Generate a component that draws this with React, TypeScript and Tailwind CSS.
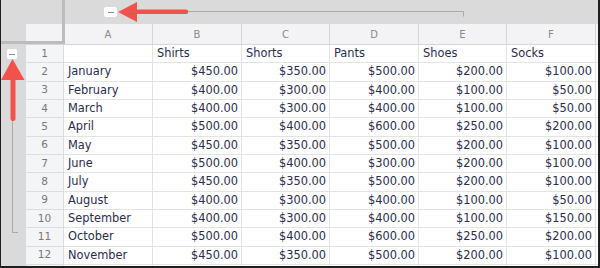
import React from "react";

const cols = ["A", "B", "C", "D", "E", "F"];

const rows: (string | number)[][] = [
  ["January", 450, 350, 500, 200, 100],
  ["February", 400, 300, 400, 100, 50],
  ["March", 400, 300, 400, 100, 50],
  ["April", 500, 400, 600, 250, 200],
  ["May", 450, 350, 500, 200, 100],
  ["June", 500, 400, 300, 200, 100],
  ["July", 450, 350, 500, 200, 100],
  ["August", 400, 300, 400, 100, 50],
  ["September", 400, 300, 400, 100, 150],
  ["October", 500, 400, 600, 250, 200],
  ["November", 450, 350, 500, 200, 100],
];

const money = (n: number) => "$" + n.toFixed(2);

const HeaderCell = ({ children }: { children?: React.ReactNode }) => (
  <div className="flex items-center justify-center bg-[#f3f3f5] border-r border-b border-[#d6d6d9] text-[10px] text-[#8a8a8e]">
    {children}
  </div>
);

const RowNum = ({ n }: { n?: number }) => (
  <div className="flex items-center justify-center bg-[#f4f5f7] border-r border-b border-[#dcdcdf] text-[10.5px] text-[#77777c]">
    {n}
  </div>
);

const Cell = ({ children, right }: { children?: React.ReactNode; right?: boolean }) => (
  <div
    className={
      "flex items-center bg-white border-r border-b border-[#e3e3e6] text-[11.4px] text-[#2b2c4c] whitespace-nowrap overflow-hidden " +
      (right ? "justify-end pr-[3px]" : "justify-start pl-[4px]")
    }
  >
    {children}
  </div>
);

const App: React.FC = () => {
  return (
    <div
      className="relative w-[600px] h-[268px] overflow-hidden bg-[#dadada] border-l border-r-2 border-b-2 border-[#1e1e1e]"
      style={{ fontFamily: '"DejaVu Sans", Verdana, sans-serif' }}
    >
      {/* group outline band */}
      <div className="h-[24px]" />
      <div className="flex">
        <div className="w-[25px] shrink-0" />
        <div className="grid grid-cols-[38px_89px_89px_88px_89px_88px_89px_4px] grid-rows-[21px_repeat(13,18.33px)] bg-white">
          <HeaderCell />
          {cols.map((c) => (
            <HeaderCell key={c}>{c}</HeaderCell>
          ))}
          <div className="bg-[#f3f3f5] border-b border-[#d6d6d9]" />

          <RowNum n={1} />
          <Cell />
          <Cell>Shirts</Cell>
          <Cell>Shorts</Cell>
          <Cell>Pants</Cell>
          <Cell>Shoes</Cell>
          <Cell>Socks</Cell>
          <div className="bg-white border-b border-[#e3e3e6]" />

          {rows.map((r, i) => (
            <React.Fragment key={i}>
              <RowNum n={i + 2} />
              <Cell>{r[0]}</Cell>
              {r.slice(1).map((v, j) => (
                <Cell key={j} right>
                  {money(v as number)}
                </Cell>
              ))}
              <div className="bg-white border-b border-[#e3e3e6]" />
            </React.Fragment>
          ))}

          <RowNum />
          <Cell />
          <Cell />
          <Cell />
          <Cell />
          <Cell />
          <Cell />
          <div className="bg-white" />
        </div>
      </div>

      {/* frozen pane separators */}
      <div className="absolute left-[61px] top-0 w-[3px] h-[44px] bg-[#bcbcbe]" />
      <div className="absolute left-0 top-[41px] w-[64px] h-[3px] bg-[#bcbcbe]" />

      {/* group outline lines + arrows */}
      <svg className="absolute left-0 top-0" width="600" height="268" viewBox="0 0 600 268">
        <path d="M186 11.5 H462.5 V16.5" fill="none" stroke="#a9a9ab" strokeWidth="1" />
        <path d="M11.5 120 V232.5 H17" fill="none" stroke="#a9a9ab" strokeWidth="1" />
        <polygon points="117,12 136,2 136,22" fill="#f2524e" />
        <line x1="134" y1="11.8" x2="185" y2="11.8" stroke="#f2524e" strokeWidth="4.5" strokeLinecap="round" />
        <polygon points="11.5,59 0,80 23.5,80" fill="#f2524e" />
        <line x1="12" y1="78" x2="12" y2="118.5" stroke="#f2524e" strokeWidth="5" strokeLinecap="round" />
      </svg>

      {/* collapse buttons */}
      <div className="absolute left-[103px] top-[7px] w-[13px] h-[10px] rounded-[2px] bg-white flex items-center justify-center">
        <div className="w-[6px] h-px bg-[#8a8a8a]" />
      </div>
      <div className="absolute left-[6px] top-[49px] w-[10px] h-[10px] rounded-[2px] bg-white flex items-center justify-center">
        <div className="w-[6px] h-px bg-[#8a8a8a]" />
      </div>
    </div>
  );
};

export default App;
